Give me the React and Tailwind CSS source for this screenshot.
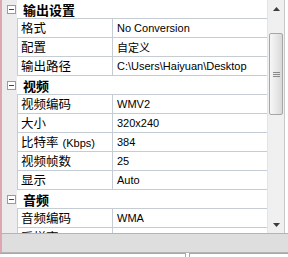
const sections = [
  {
    title: '输出设置',
    rows: [
      ['格式', 'No Conversion'],
      ['配置', '自定义'],
      ['输出路径', 'C:\\Users\\Haiyuan\\Desktop'],
    ],
  },
  {
    title: '视频',
    rows: [
      ['视频编码', 'WMV2'],
      ['大小', '320x240'],
      ['比特率', '384', '(Kbps)'],
      ['视频帧数', '25'],
      ['显示', 'Auto'],
    ],
  },
  {
    title: '音频',
    rows: [
      ['音频编码', 'WMA'],
      ['采样率', '44100'],
    ],
  },
];

const cjk = { fontFamily: '"Noto Sans CJK SC", "Liberation Sans", sans-serif' };
const latin = { fontFamily: '"Liberation Sans", "Noto Sans CJK SC", sans-serif' };

function Header({ title }) {
  return (
    <div className="flex h-[19px] shrink-0">
      <div className="w-[15px] bg-[#ececec] relative">
        <span className="absolute left-[5px] top-[5px] w-[9px] h-[9px] border border-[#9a9a9a] bg-white flex items-center justify-center">
          <span className="w-[5px] h-px bg-[#444]"></span>
        </span>
      </div>
      <div className="flex-1 bg-white border-b border-[#c5ccd4] pl-[6px] flex items-center">
        <span className="text-[13px] font-bold leading-none text-black" style={cjk}>{title}</span>
      </div>
    </div>
  );
}

function Row({ name, value, unit }) {
  return (
    <div className="flex h-[19px] shrink-0">
      <div className="w-[15px] bg-[#ececec]"></div>
      <div className="w-[96px] border-l border-r border-b border-[#c5ccd4] bg-white pl-[3px] flex items-center">
        <span className="text-[12.5px] leading-none text-black whitespace-nowrap" style={cjk}>
          {name}
          {unit && <span className="text-[11px] ml-[4px]" style={latin}>{unit}</span>}
        </span>
      </div>
      <div className="flex-1 border-b border-[#c5ccd4] bg-white pl-[4px] flex items-center overflow-hidden">
        <span className="text-[11px] leading-none text-black whitespace-nowrap" style={/[\u4e00-\u9fff]/.test(value) ? cjk : latin}>
          {value}
        </span>
      </div>
    </div>
  );
}

function Arrow({ up }) {
  return (
    <svg width="7" height="4" viewBox="0 0 7 4">
      {up ? <path d="M0 4 L3.5 0 L7 4 Z" fill="#3c3c3c" /> : <path d="M0 0 L3.5 4 L7 0 Z" fill="#3c3c3c" />}
    </svg>
  );
}

export default function App() {
  return (
    <div className="w-[288px] h-[257px] bg-white overflow-hidden flex flex-col">
      <div className="flex h-[233px] shrink-0">
        <div className="w-[2px] bg-[#dca7ae]"></div>
        <div className="w-[265px] flex flex-col overflow-hidden">
          {sections.map((s) => (
            <div key={s.title} className="flex flex-col">
              <Header title={s.title} />
              {s.rows.map(([n, v, u]) => (
                <Row key={n} name={n} value={v} unit={u} />
              ))}
            </div>
          ))}
        </div>
        {/* scrollbar */}
        <div className="w-[17px] bg-[#f0f0f0] border-l border-[#e4e4e4] flex flex-col">
          <div className="h-[17px] flex items-center justify-center">
            <Arrow up />
          </div>
          <div className="h-[16px]"></div>
          <div className="h-[82px] mx-px rounded-[2px] border border-[#a6a6a6] bg-gradient-to-r from-[#f6f6f6] via-[#e9e9e9] to-[#d8d8d8] flex items-center justify-center">
            <div className="flex flex-col gap-px">
              <span className="w-[7px] h-px bg-[#8a8a8a]"></span>
              <span className="w-[7px] h-px bg-[#8a8a8a]"></span>
              <span className="w-[7px] h-px bg-[#8a8a8a]"></span>
            </div>
          </div>
          <div className="flex-1"></div>
          <div className="h-[17px] flex items-center justify-center">
            <Arrow />
          </div>
        </div>
        <div className="flex-1 bg-white border-l border-[#c8c8c8]"></div>
      </div>
      <div className="h-[20px] shrink-0 bg-[#dedede] border-t border-b border-[#b4b4b4] border-l-2 border-l-[#dca7ae]"></div>
      <div className="flex-1 flex gap-[3px]">
        <div className="w-[186px] border-t border-r border-[#a8a8a8] bg-white"></div>
        <div className="flex-1 border-t border-l border-[#a8a8a8] bg-white"></div>
      </div>
    </div>
  );
}
